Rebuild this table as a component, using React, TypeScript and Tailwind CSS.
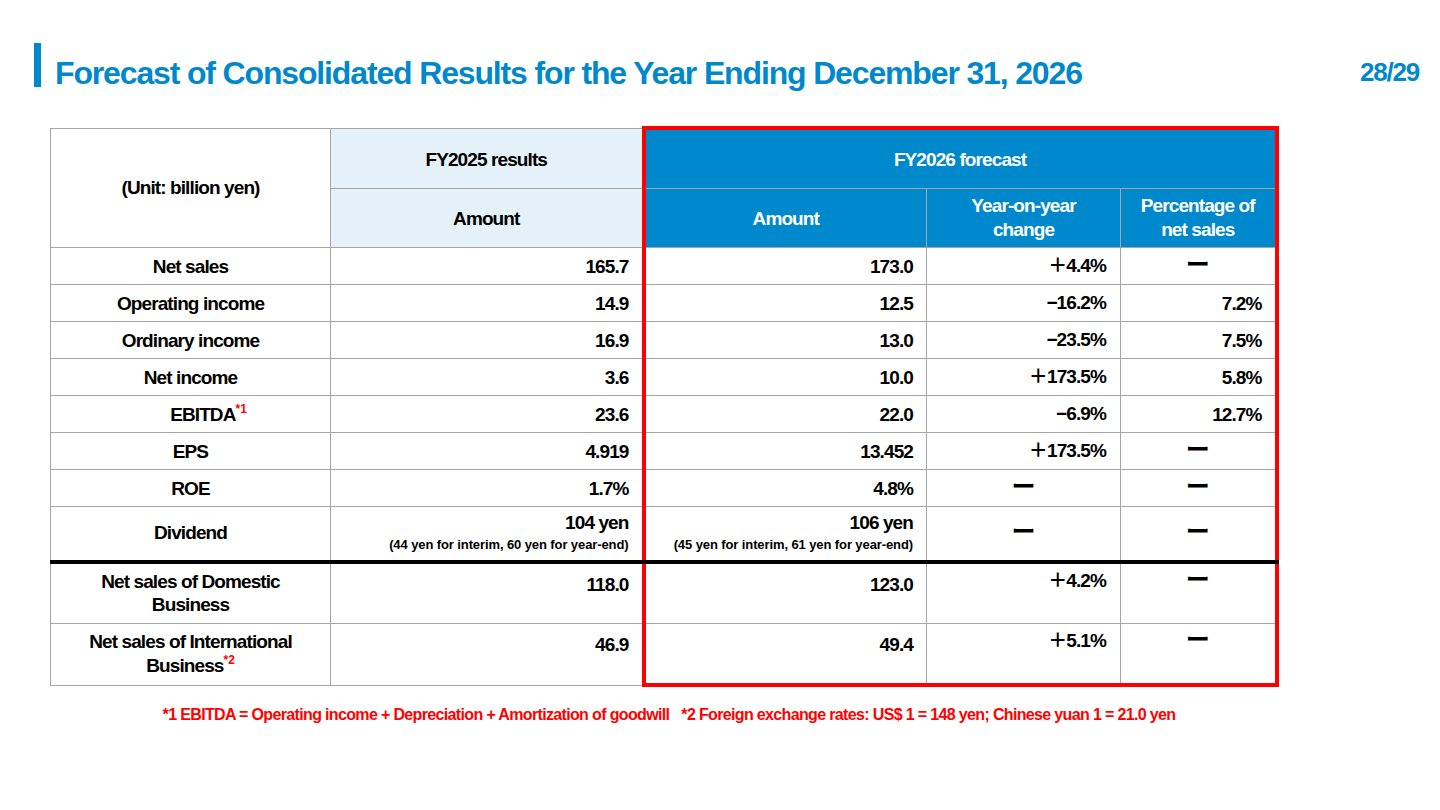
const font = { fontFamily: '"Liberation Sans Narrow", "Arial Narrow", "Liberation Sans", "Noto Sans CJK JP", sans-serif' };

type Row = {
  label: React.ReactNode;
  fy25: React.ReactNode;
  fy26: React.ReactNode;
  yoy: string;
  pct: string;
};

const DASH = 'ー';

function Note({ n }: { n: string }) {
  return <span className="relative -top-[8px] text-[12px] text-[#ff0000] tracking-normal">{n}</span>;
}

const rows: Row[] = [
  { label: 'Net sales', fy25: '165.7', fy26: '173.0', yoy: '＋4.4%', pct: DASH },
  { label: 'Operating income', fy25: '14.9', fy26: '12.5', yoy: '−16.2%', pct: '7.2%' },
  { label: 'Ordinary income', fy25: '16.9', fy26: '13.0', yoy: '−23.5%', pct: '7.5%' },
  { label: 'Net income', fy25: '3.6', fy26: '10.0', yoy: '＋173.5%', pct: '5.8%' },
  {
    label: (
      <span className="pl-[36px]">
        EBITDA
        <Note n="*1" />
      </span>
    ),
    fy25: '23.6',
    fy26: '22.0',
    yoy: '−6.9%',
    pct: '12.7%',
  },
  { label: 'EPS', fy25: '4.919', fy26: '13.452', yoy: '＋173.5%', pct: DASH },
  { label: 'ROE', fy25: '1.7%', fy26: '4.8%', yoy: DASH, pct: DASH },
];

const cell = 'border border-[#a6a6a6] text-[19px] font-bold text-black leading-tight tracking-[-0.9px]';
const num = `${cell} text-right pr-[13px]`;
const dashCell = `${cell} text-center`;

function Dash() {
  return (
    <span className="inline-block font-['Noto_Sans_CJK_JP'] text-[24px] leading-none font-bold tracking-normal relative -top-[1px]">
      {DASH}
    </span>
  );
}

function Val({ v }: { v: string }) {
  if (v === DASH) return <Dash />;
  return <>{v}</>;
}

export default function App() {
  return (
    <div className="w-[1440px] h-[810px] bg-white overflow-hidden relative" style={font}>
      {/* Header */}
      <div className="flex items-start justify-between pt-[41px] pl-[34px] pr-[21px]">
        <div className="flex items-center gap-[14px]">
          <div className="w-[7px] h-[44px] bg-[#0088cc]" />
          <h1 className="text-[32px] font-bold text-[#0088cc] leading-none mt-[16px] tracking-[-1.15px]">
            Forecast of Consolidated Results for the Year Ending December 31, 2026
          </h1>
        </div>
        <div className="text-[26px] font-bold text-[#0088cc] leading-none mt-[18px] tracking-[-1.2px]">28/29</div>
      </div>

      {/* Table */}
      <div className="pl-[50px] pt-[37px]">
        <table className="table-fixed border-collapse w-[1226px]">
          <colgroup>
            <col className="w-[280px]" />
            <col className="w-[313px]" />
            <col className="w-[283px]" />
            <col className="w-[194px]" />
            <col className="w-[156px]" />
          </colgroup>
          <thead>
            <tr className="h-[60px]">
              <td rowSpan={2} className={`${cell} text-center`}>
                (Unit: billion yen)
              </td>
              <td className={`${cell} text-center bg-[#e4f1f8] text-[18px] pt-[3px]`}>FY2025 results</td>
              <td
                colSpan={3}
                className={`${cell} text-center bg-[#0088cc] text-white text-[18px] pt-[3px] border-l-[4px] border-l-[#ff0000] border-r-[4px] border-r-[#ff0000] border-t-[4px] border-t-[#ff0000]`}
              >
                FY2026 forecast
              </td>
            </tr>
            <tr className="h-[59px]">
              <td className={`${cell} text-center bg-[#e4f1f8] pt-[3px]`}>Amount</td>
              <td className={`${cell} text-center bg-[#0088cc] text-white pt-[3px] border-l-[4px] border-l-[#ff0000]`}>Amount</td>
              <td className={`${cell} text-center bg-[#0088cc] text-white leading-[25px]`}>
                Year-on-year
                <br />
                change
              </td>
              <td className={`${cell} text-center bg-[#0088cc] text-white leading-[25px] border-r-[4px] border-r-[#ff0000]`}>
                Percentage of
                <br />
                net sales
              </td>
            </tr>
          </thead>
          <tbody>
            {rows.map((r, i) => (
              <tr key={i} className="h-[37px]">
                <td className={`${cell} text-center pt-[3px]`}>{r.label}</td>
                <td className={`${num} pt-[3px]`}>{r.fy25}</td>
                <td className={`${num} pt-[3px] border-l-[4px] border-l-[#ff0000]`}>{r.fy26}</td>
                <td className={r.yoy === DASH ? dashCell : `${num} pr-[14px]`}>
                  <Val v={r.yoy} />
                </td>
                <td className={`${r.pct === DASH ? dashCell : `${num} pt-[3px]`} border-r-[4px] border-r-[#ff0000]`}>
                  <Val v={r.pct} />
                </td>
              </tr>
            ))}
            <tr className="h-[56px]">
              <td className={`${cell} text-center border-b-[4px] border-b-black`}>Dividend</td>
              <td className={`${num} border-b-[4px] border-b-black`}>
                <div>104 yen</div>
                <div className="text-[13px] leading-[20px] tracking-[-0.1px]">(44 yen for interim, 60 yen for year-end)</div>
              </td>
              <td className={`${num} border-l-[4px] border-l-[#ff0000] border-b-[4px] border-b-black`}>
                <div>106 yen</div>
                <div className="text-[13px] leading-[20px] tracking-[-0.1px]">(45 yen for interim, 61 yen for year-end)</div>
              </td>
              <td className={`${dashCell} border-b-[4px] border-b-black`}>
                <Dash />
              </td>
              <td className={`${dashCell} border-b-[4px] border-b-black border-r-[4px] border-r-[#ff0000]`}>
                <Dash />
              </td>
            </tr>
            <tr className="h-[61px]">
              <td className={`${cell} text-center leading-[25px]`}>
                Net sales of Domestic
                <br />
                Business
              </td>
              <td className={`${num} align-top pt-[9px]`}>118.0</td>
              <td className={`${num} align-top pt-[9px] border-l-[4px] border-l-[#ff0000]`}>123.0</td>
              <td className={`${num} align-top pt-[5px] pr-[14px]`}>＋4.2%</td>
              <td className={`${dashCell} align-top pt-[3px] border-r-[4px] border-r-[#ff0000]`}>
                <Dash />
              </td>
            </tr>
            <tr className="h-[62px]">
              <td className={`${cell} text-center leading-[25px]`}>
                Net sales of International
                <br />
                Business
                <Note n="*2" />
              </td>
              <td className={`${num} align-top pt-[9px]`}>46.9</td>
              <td className={`${num} align-top pt-[9px] border-l-[4px] border-l-[#ff0000] border-b-[4px] border-b-[#ff0000]`}>49.4</td>
              <td className={`${num} align-top pt-[5px] pr-[14px] border-b-[4px] border-b-[#ff0000]`}>＋5.1%</td>
              <td className={`${dashCell} align-top pt-[3px] border-r-[4px] border-r-[#ff0000] border-b-[4px] border-b-[#ff0000]`}>
                <Dash />
              </td>
            </tr>
          </tbody>
        </table>
      </div>

      {/* Footnotes */}
      <div className="flex justify-center gap-[12px] pt-[16px] w-[1338px] text-[16px] font-bold text-[#ff0000] whitespace-pre tracking-[-0.65px]">
        <span>*1 EBITDA = Operating income + Depreciation + Amortization of goodwill</span>
        <span>*2 Foreign exchange rates: US$ 1 = 148 yen; Chinese yuan 1 = 21.0 yen</span>
      </div>
    </div>
  );
}
